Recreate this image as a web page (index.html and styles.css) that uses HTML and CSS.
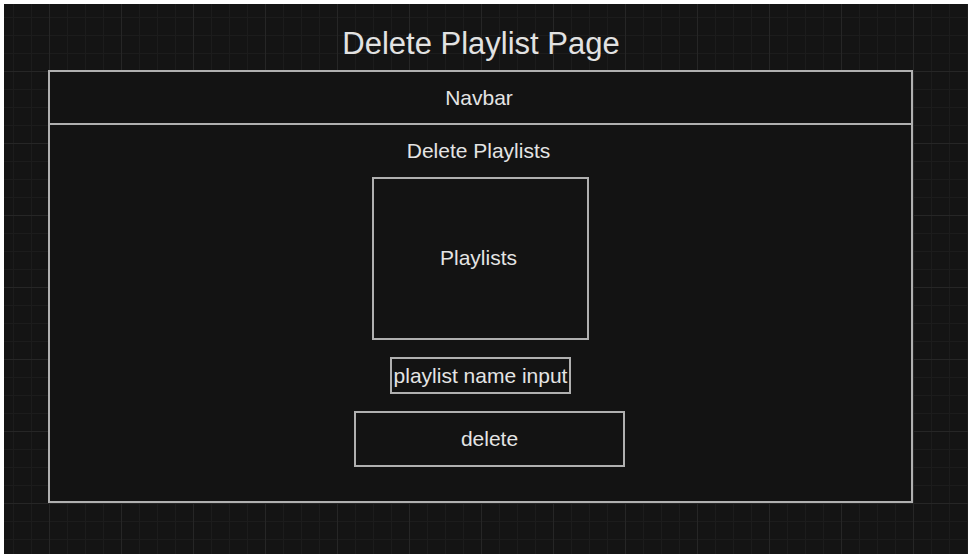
FILE: index.html
```html
<!DOCTYPE html>
<html lang="en">
<head>
<meta charset="utf-8">
<title>Delete Playlist Page</title>
<link rel="stylesheet" href="styles.css">
</head>
<body>
<div class="canvas">
  <h1 class="title">Delete Playlist Page</h1>
  <div class="frame">
    <div class="navbar">Navbar</div>
    <div class="content">
      <div class="heading">Delete Playlists</div>
      <div class="playlists">Playlists</div>
      <div class="name-input">playlist name input</div>
      <div class="delete-btn">delete</div>
    </div>
  </div>
</div>
</body>
</html>
```
FILE: styles.css
```css
html, body {
  margin: 0;
  padding: 0;
  background: #ffffff;
}

body {
  font-family: "Liberation Sans", Arial, sans-serif;
  color: #e4e4e4;
}

.canvas {
  margin: 4px 4px 2px 4px;
  height: 550px;
  box-sizing: border-box;
  padding-top: 22px;
  background-color: #141414;
  background-image:
    linear-gradient(to right, #262626 1px, transparent 1px),
    linear-gradient(to bottom, #262626 1px, transparent 1px),
    linear-gradient(to right, #1c1c1c 1px, transparent 1px),
    linear-gradient(to bottom, #1c1c1c 1px, transparent 1px);
  background-size: 72px 72px, 72px 72px, 18px 18px, 18px 18px;
  background-position: 45px 67px, 45px 67px, 45px 67px, 45px 67px;
}

.title {
  margin: 0;
  height: 44px;
  font-size: 31px;
  font-weight: normal;
  line-height: 36px;
  text-align: center;
  color: #e2e2e2;
  transform: translateX(-5px);
}

.frame {
  margin-left: 44px;
  width: 865px;
  height: 433px;
  box-sizing: border-box;
  border: 2px solid #b0b0b0;
  background: #131313;
  display: flex;
  flex-direction: column;
}

.navbar {
  height: 53px;
  box-sizing: border-box;
  border-bottom: 2px solid #b0b0b0;
  display: flex;
  align-items: center;
  justify-content: center;
  font-size: 21px;
  padding-right: 3px;
}

.content {
  flex: 1;
  display: flex;
  flex-direction: column;
  align-items: center;
  padding-top: 14px;
}

.heading {
  font-size: 21px;
  line-height: 24px;
  margin-bottom: 14px;
  transform: translateX(-2px);
}

.playlists {
  width: 217px;
  height: 163px;
  box-sizing: border-box;
  border: 2px solid #b0b0b0;
  display: flex;
  align-items: center;
  justify-content: center;
  font-size: 21px;
  padding-bottom: 1px;
  padding-right: 4px;
}

.name-input {
  margin-top: 17px;
  width: 181px;
  height: 37px;
  box-sizing: border-box;
  border: 2px solid #b0b0b0;
  display: flex;
  align-items: center;
  justify-content: center;
  font-size: 21px;
  white-space: nowrap;
  overflow: visible;
}

.delete-btn {
  margin-top: 17px;
  width: 271px;
  height: 56px;
  box-sizing: border-box;
  border: 2px solid #b0b0b0;
  display: flex;
  align-items: center;
  justify-content: center;
  font-size: 21px;
  transform: translateX(9px);
}
```
